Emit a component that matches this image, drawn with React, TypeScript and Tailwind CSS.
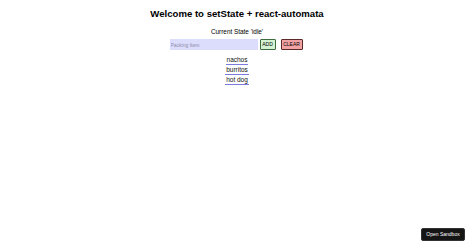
import { useState } from "react";

const font = { fontFamily: '"Liberation Sans", Arial, sans-serif' };

export default function App() {
  const [items] = useState(["nachos", "burritos", "hot dog"]);
  const [value, setValue] = useState("");

  return (
    <div className="relative h-[248px] w-full bg-white text-black" style={font}>
      <div className="flex flex-col items-center pt-[8px]">
        <h1 className="text-[9.6px] font-bold leading-[12px]">
          Welcome to setState + react-automata
        </h1>
        <div className="mt-[8px] text-[6.4px] leading-[8px]">Current State 'idle'</div>

        {/* form row */}
        <div className="mt-[3px] mr-[2px] flex items-center">
          <input
            value={value}
            onChange={(e) => setValue(e.target.value)}
            placeholder="Packing Item"
            className="h-[11px] w-[88px] bg-[#dcdcfc] px-[1px] text-[5px] outline-none placeholder:text-[#8f8fa8]"
          />
          <button
            type="button"
            className="ml-[2px] h-[11px] w-[16px] rounded-[1px] border border-[#3d6b3d] bg-[#d3f2d3] text-[5px] leading-none"
          >
            ADD
          </button>
          <button
            type="button"
            className="ml-[5px] h-[11px] w-[22px] rounded-[1px] border border-[#5a2a2a] bg-[#f2a3a3] text-[5px] leading-none"
          >
            CLEAR
          </button>
        </div>

        <ul className="mt-[6px] flex flex-col items-center">
          {items.map((item) => (
            <li
              key={item}
              className="mb-[1px] border-b border-[#7a7ae0] px-[1px] text-[6.5px] leading-[8px] text-[#111]"
            >
              {item}
            </li>
          ))}
        </ul>
      </div>

      <button
        type="button"
        className="absolute bottom-[7px] right-[9px] h-[13px] w-[44px] rounded-[2px] border border-[#333] bg-[#151515] text-[5px] text-white"
      >
        Open Sandbox
      </button>
    </div>
  );
}
